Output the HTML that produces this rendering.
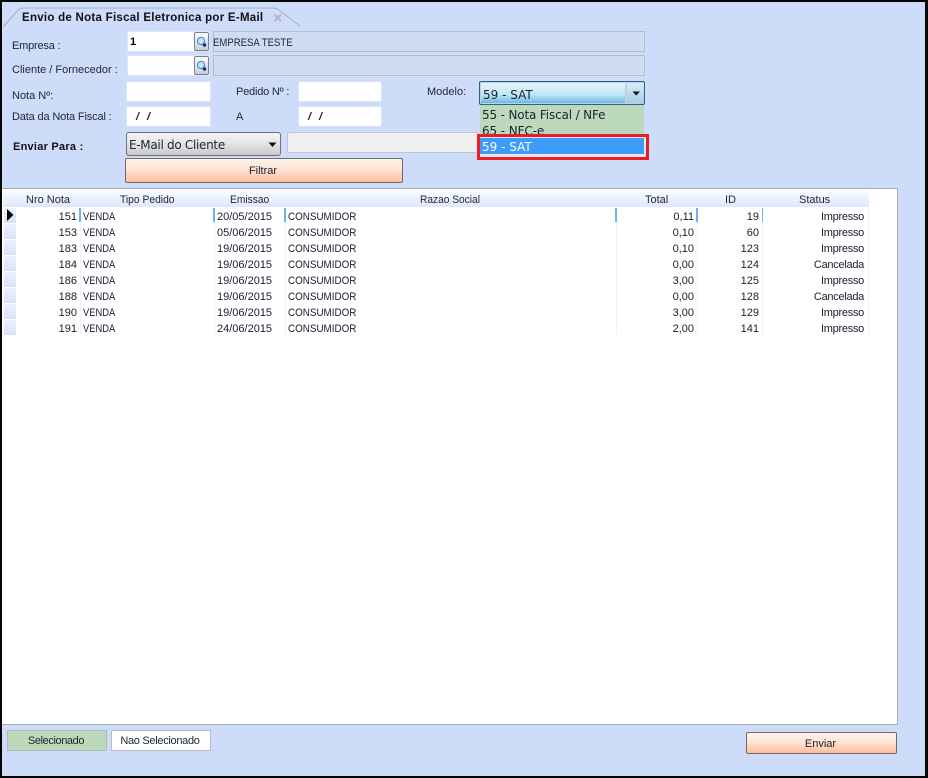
<!DOCTYPE html>
<html><head><meta charset="utf-8"><style>
html,body{margin:0;padding:0}
body{width:928px;height:778px;overflow:hidden;position:relative;background:#cddcf9;font-family:"Liberation Sans",sans-serif;font-size:11px;color:#1c1c30}
.a,.l,.i,.c,.h{position:absolute;box-sizing:border-box}
.l{white-space:nowrap;line-height:14px;height:14px;font-size:11px;color:#22263a}
.i{background:#fff;border:1px solid #dbe4f5;height:21px}
.h{top:193px;height:14px;line-height:14px;color:#22263a;text-align:center;white-space:nowrap}
.c{height:16px;line-height:16px;white-space:nowrap;color:#1c1c30;margin-top:1px}
.r{text-align:right}
.v{transform:scaleX(.85);transform-origin:0 50%}
.n{transform:scaleX(.895);transform-origin:0 50%}
.t{letter-spacing:-.28px}
.s{width:1px;top:208px;height:127px;background:#eef1f7;position:absolute}
.b{width:2px;top:208px;height:14px;background:#6fb0f5;position:absolute}
.m{left:4px;width:12px;height:15px;position:absolute;background:linear-gradient(#edf2fc,#d6e2f8)}
.btn{position:absolute;box-sizing:border-box;border:1px solid #6f6a66;border-radius:2px;background:linear-gradient(#fff4ec,#ffe2d0 50%,#fdbd98);text-align:center;color:#1c1c30}
.dd{font-family:"DejaVu Sans",sans-serif;font-size:12px;white-space:nowrap;position:absolute;color:#1c2430}
.lup{position:absolute;left:194px;width:15px;height:19px;box-sizing:border-box;border:1px solid #77808c;border-radius:2px;background:linear-gradient(#fbfcfe,#c6cedb)}
</style></head><body>
<div class="a" style="left:0;top:0;width:928px;height:2px;background:#050505"></div>
<div class="a" style="left:0;top:0;width:2px;height:778px;background:#050505"></div>
<div class="a" style="left:925px;top:0;width:3px;height:778px;background:#050505"></div>
<div class="a" style="left:0;top:776px;width:928px;height:2px;background:#050505"></div>

<svg class="a" style="left:0;top:0" width="310" height="30"><path d="M3 27 L17 11 Q20 8 24 8 L272 8 Q276 8 279 10 L300 26" fill="none" stroke="#a9b0bb" stroke-width="1"/></svg>
<div class="l" style="left:22px;top:11px;font-weight:bold;font-size:11.5px;color:#101018;letter-spacing:.27px">Envio de Nota Fiscal Eletronica por E-Mail</div>
<svg class="a" style="left:272px;top:12px" width="12" height="12"><path d="M2.5 2.5 L9 9 M9 2.5 L2.5 9" stroke="#b3b6bc" stroke-width="2"/></svg>

<div class="l" style="left:12px;top:39px;letter-spacing:-.2px">Empresa :</div>
<div class="l" style="left:12px;top:63px">Cliente / Fornecedor :</div>
<div class="l" style="left:12px;top:89px">Nota Nº:</div>
<div class="l" style="left:12px;top:110px;letter-spacing:-.15px">Data da Nota Fiscal :</div>
<div class="l" style="left:236px;top:85px;letter-spacing:-.2px">Pedido Nº :</div>
<div class="l" style="left:236px;top:110px">A</div>
<div class="l" style="left:427px;top:85px">Modelo:</div>
<div class="l" style="left:13px;top:140px;font-weight:bold;color:#101018;letter-spacing:.25px">Enviar Para :</div>

<div class="i" style="left:127px;top:31px;width:83px;height:21px"></div>
<div class="l" style="left:130px;top:35px;font-weight:bold;color:#000">1</div>
<div class="lup" style="top:32px"><svg width="13" height="17"><circle cx="6" cy="8" r="3.6" fill="#bfe6f5" stroke="#3a87b5"/><circle cx="9.5" cy="12" r="1.8" fill="#14307c"/></svg></div>
<div class="i" style="left:127px;top:55px;width:83px;height:21px"></div>
<div class="lup" style="top:56px"><svg width="13" height="17"><circle cx="6" cy="8" r="3.6" fill="#bfe6f5" stroke="#3a87b5"/><circle cx="9.5" cy="12" r="1.8" fill="#14307c"/></svg></div>
<div class="a" style="left:213px;top:31px;width:432px;height:21px;background:#cfdcf1;border:1px solid #b4bcc8"></div>
<div class="l" style="left:213px;top:36px;color:#1c2a3a;transform:scaleX(.87);transform-origin:0 50%">EMPRESA TESTE</div>
<div class="a" style="left:213px;top:55px;width:432px;height:21px;background:#cfdcf1;border:1px solid #b4bcc8"></div>

<div class="i" style="left:126px;top:81px;width:85px"></div>
<div class="i" style="left:298px;top:81px;width:84px"></div>
<div class="i" style="left:126px;top:106px;width:85px"></div>
<div class="i" style="left:298px;top:106px;width:84px"></div>
<div class="l" style="left:136px;top:110px;font-weight:bold;color:#222;letter-spacing:8px;font-style:italic">//</div>
<div class="l" style="left:308px;top:110px;font-weight:bold;color:#222;letter-spacing:8px;font-style:italic">//</div>

<div class="a" style="left:126px;top:132px;width:155px;height:24px;border:1px solid #6d7076;border-radius:3px;background:linear-gradient(#f4f4f4,#e6e6e6 45%,#c9c9c9)"></div>
<div class="dd" style="left:129px;top:138px;letter-spacing:-.3px">E-Mail do Cliente</div>
<svg class="a" style="left:268px;top:142px" width="10" height="6"><path d="M0.5 0.5 H8.5 L4.5 5 Z" fill="#111"/></svg>
<div class="a" style="left:287px;top:132px;width:192px;height:21px;background:#f0f0f0;border:1px solid #c2c5ca;border-radius:2px"></div>
<div class="btn" style="left:125px;top:158px;width:278px;height:25px;line-height:25px"><span style="position:relative;left:-1px">Filtrar</span></div>

<div class="a" style="left:479px;top:81px;width:166px;height:24px;border:1px solid #2d5f86;border-radius:2px;background:#b9d3e8"></div>
<div class="a" style="left:481px;top:83px;width:144px;height:20px;background:linear-gradient(#e6f5fb,#bde6f4 60%,#6fb6e0)"></div>
<div class="a" style="left:627px;top:83px;width:17px;height:20px;background:linear-gradient(#d9ecf7,#a7cde6)"></div>
<svg class="a" style="left:632px;top:91px" width="10" height="6"><path d="M0.5 0.5 H8 L4.25 4.5 Z" fill="#111"/></svg>
<div class="dd" style="left:483px;top:88px">59 - SAT</div>
<div class="a" style="left:480px;top:105px;width:164px;height:31px;background:#bdd9bb"></div>
<div class="dd" style="left:482px;top:108px;letter-spacing:-.15px">55 - Nota Fiscal / NFe</div>
<div class="dd" style="left:482px;top:124px;letter-spacing:-.1px">65 - NFC-e</div>
<div class="a" style="left:477px;top:134px;width:172px;height:26px;background:#e8e9ef;border:3px solid #ec1c24"></div>
<div class="a" style="left:480px;top:138px;width:164px;height:16px;background:#3c9bfb"></div>
<div class="dd" style="left:482px;top:140px;color:#fff">59 - SAT</div>

<div class="a" style="left:2px;top:188px;width:896px;height:537px;background:#fff;border-top:1px solid #a9acb3;border-bottom:1px solid #a9acb3;border-right:1px solid #a9acb3"></div>
<div class="a" style="left:3px;top:190px;width:866px;height:17px;background:linear-gradient(#fbfcff,#dde8fb);border-radius:3px 3px 0 0"></div>
<div class="h" style="left:26px">Nro Nota</div>
<div class="h" style="left:120px;transform:scaleX(.935);transform-origin:0 50%">Tipo Pedido</div>
<div class="h" style="left:230px;transform:scaleX(.93);transform-origin:0 50%">Emissao</div>
<div class="h" style="left:420px;transform:scaleX(.925);transform-origin:0 50%">Razao Social</div>
<div class="h" style="left:645px">Total</div>
<div class="h" style="left:725px">ID</div>
<div class="h" style="left:799px">Status</div>

<div class="m" style="top:208px"></div><div class="m" style="top:224px"></div><div class="m" style="top:240px"></div><div class="m" style="top:256px"></div><div class="m" style="top:272px"></div><div class="m" style="top:288px"></div><div class="m" style="top:304px"></div><div class="m" style="top:320px"></div>
<svg class="a" style="left:7px;top:209px" width="8" height="13"><path d="M0 0 L6.5 6 L0 12 Z" fill="#000"/></svg>

<div class="s" style="left:80px"></div><div class="s" style="left:214px"></div><div class="s" style="left:285px"></div><div class="s" style="left:616px"></div><div class="s" style="left:697px"></div><div class="s" style="left:762px"></div><div class="s" style="left:868px"></div>
<div class="b" style="left:79px"></div><div class="b" style="left:213px"></div><div class="b" style="left:284px"></div><div class="b" style="left:615px"></div><div class="b" style="left:696px"></div><div class="b" style="left:762px;width:1px"></div>

<div class="c r" style="left:30px;top:208px;width:47px">151</div><div class="c v" style="left:83px;top:208px">VENDA</div><div class="c" style="left:217px;top:208px">20/05/2015</div><div class="c n" style="left:288px;top:208px">CONSUMIDOR</div><div class="c r" style="left:640px;top:208px;width:54px">0,11</div><div class="c r" style="left:710px;top:208px;width:49px">19</div><div class="c r t" style="left:790px;top:208px;width:74px">Impresso</div>
<div class="c r" style="left:30px;top:224px;width:47px">153</div><div class="c v" style="left:83px;top:224px">VENDA</div><div class="c" style="left:217px;top:224px">05/06/2015</div><div class="c n" style="left:288px;top:224px">CONSUMIDOR</div><div class="c r" style="left:640px;top:224px;width:54px">0,10</div><div class="c r" style="left:710px;top:224px;width:49px">60</div><div class="c r t" style="left:790px;top:224px;width:74px">Impresso</div>
<div class="c r" style="left:30px;top:240px;width:47px">183</div><div class="c v" style="left:83px;top:240px">VENDA</div><div class="c" style="left:217px;top:240px">19/06/2015</div><div class="c n" style="left:288px;top:240px">CONSUMIDOR</div><div class="c r" style="left:640px;top:240px;width:54px">0,10</div><div class="c r" style="left:710px;top:240px;width:49px">123</div><div class="c r t" style="left:790px;top:240px;width:74px">Impresso</div>
<div class="c r" style="left:30px;top:256px;width:47px">184</div><div class="c v" style="left:83px;top:256px">VENDA</div><div class="c" style="left:217px;top:256px">19/06/2015</div><div class="c n" style="left:288px;top:256px">CONSUMIDOR</div><div class="c r" style="left:640px;top:256px;width:54px">0,00</div><div class="c r" style="left:710px;top:256px;width:49px">124</div><div class="c r t" style="left:790px;top:256px;width:74px">Cancelada</div>
<div class="c r" style="left:30px;top:272px;width:47px">186</div><div class="c v" style="left:83px;top:272px">VENDA</div><div class="c" style="left:217px;top:272px">19/06/2015</div><div class="c n" style="left:288px;top:272px">CONSUMIDOR</div><div class="c r" style="left:640px;top:272px;width:54px">3,00</div><div class="c r" style="left:710px;top:272px;width:49px">125</div><div class="c r t" style="left:790px;top:272px;width:74px">Impresso</div>
<div class="c r" style="left:30px;top:288px;width:47px">188</div><div class="c v" style="left:83px;top:288px">VENDA</div><div class="c" style="left:217px;top:288px">19/06/2015</div><div class="c n" style="left:288px;top:288px">CONSUMIDOR</div><div class="c r" style="left:640px;top:288px;width:54px">0,00</div><div class="c r" style="left:710px;top:288px;width:49px">128</div><div class="c r t" style="left:790px;top:288px;width:74px">Cancelada</div>
<div class="c r" style="left:30px;top:304px;width:47px">190</div><div class="c v" style="left:83px;top:304px">VENDA</div><div class="c" style="left:217px;top:304px">19/06/2015</div><div class="c n" style="left:288px;top:304px">CONSUMIDOR</div><div class="c r" style="left:640px;top:304px;width:54px">3,00</div><div class="c r" style="left:710px;top:304px;width:49px">129</div><div class="c r t" style="left:790px;top:304px;width:74px">Impresso</div>
<div class="c r" style="left:30px;top:320px;width:47px">191</div><div class="c v" style="left:83px;top:320px">VENDA</div><div class="c" style="left:217px;top:320px">24/06/2015</div><div class="c n" style="left:288px;top:320px">CONSUMIDOR</div><div class="c r" style="left:640px;top:320px;width:54px">2,00</div><div class="c r" style="left:710px;top:320px;width:49px">141</div><div class="c r t" style="left:790px;top:320px;width:74px">Impresso</div>

<div class="a" style="left:7px;top:730px;width:100px;height:21px;background:#bdd9bb;border:1px solid #b2bcc0;text-align:center;line-height:21px;color:#1c2430;letter-spacing:-.4px;padding-right:2px">Selecionado</div>
<div class="a" style="left:111px;top:730px;width:100px;height:21px;background:#fff;border:1px solid #b7bcc6;text-align:center;line-height:21px;color:#1c2430;letter-spacing:-.3px;padding-right:2px">Nao Selecionado</div>
<div class="btn" style="left:746px;top:732px;width:151px;height:22px;line-height:22px"><span style="position:relative;left:-1px">Enviar</span></div>
</body></html>
